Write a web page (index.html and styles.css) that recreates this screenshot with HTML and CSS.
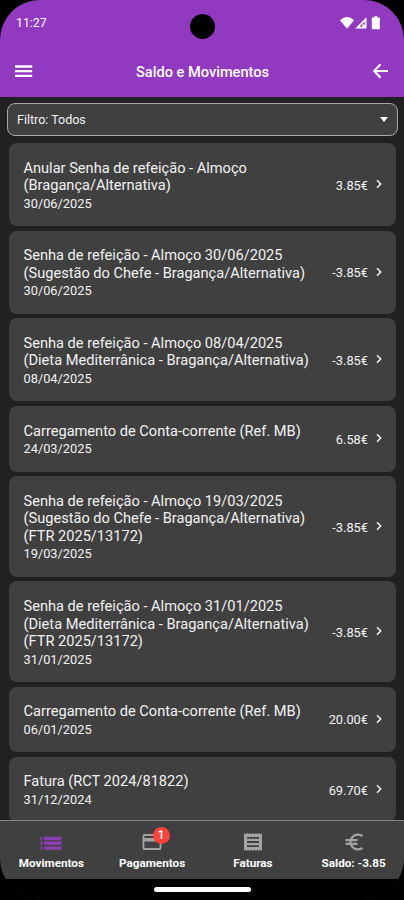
FILE: index.html
```html
<!DOCTYPE html>
<html lang="pt">
<head>
  <meta charset="UTF-8">
  <meta name="viewport" content="width=device-width, initial-scale=1.0">
  <title>Saldo e Movimentos</title>
  <link rel="stylesheet" href="styles.css">
</head>
<body>
  <div class="screen">
    <header class="header">
      <div class="status-bar">
        <span class="clock">11:27</span>
        <span class="camera"></span>
        <svg class="status-icons" width="42" height="14" viewBox="0 0 42 14">
          <path d="M0 4.2Q7 -2 14 4.2L7 12.8Z" fill="#fff"/>
          <path d="M26.5 1.2V12.5H15.2ZM24.7 5.5L19.5 10.8H22.3V8.5H24.7Z" fill="#fff" fill-rule="evenodd"/>
          <path d="M34.2 0.2h3.2v1.3h2.400v11.8h-8V1.5h2.400Z" fill="#fff"/>
        </svg>
      </div>
      <div class="toolbar">
        <svg class="menu-icon" width="18" height="14" viewBox="0 0 18 14">
          <path d="M0 2.5h17.2M0 7.2h17.2M0 11.9h17.2" stroke="#fff" stroke-width="2.3"/>
        </svg>
        <h1>Saldo e Movimentos</h1>
        <svg class="back-icon" width="16" height="16" viewBox="0 0 16 16">
          <path d="M7.5 1.2L1.2 8l6.3 6.8M1.4 8h13.6" fill="none" stroke="#fff" stroke-width="2.1"/>
        </svg>
      </div>
    </header>

    <div class="filter">
      <span>Filtro: Todos</span>
      <span class="caret"></span>
    </div>

    <ul class="movements">
      <li class="card">
        <div class="info">
          <p class="title">Anular Senha de refeição - Almoço<br>(Bragança/Alternativa)</p>
          <p class="date">30/06/2025</p>
        </div>
        <span class="amount">3.85€</span>
        <svg class="chevron" width="6" height="10" viewBox="0 0 6 10"><path d="M1 1.2L4.7 5L1 8.8"/></svg>
      </li>
      <li class="card">
        <div class="info">
          <p class="title">Senha de refeição - Almoço 30/06/2025<br>(Sugestão do Chefe - Bragança/Alternativa)</p>
          <p class="date">30/06/2025</p>
        </div>
        <span class="amount">-3.85€</span>
        <svg class="chevron" width="6" height="10" viewBox="0 0 6 10"><path d="M1 1.2L4.7 5L1 8.8"/></svg>
      </li>
      <li class="card">
        <div class="info">
          <p class="title">Senha de refeição - Almoço 08/04/2025<br>(Dieta Mediterrânica - Bragança/Alternativa)</p>
          <p class="date">08/04/2025</p>
        </div>
        <span class="amount">-3.85€</span>
        <svg class="chevron" width="6" height="10" viewBox="0 0 6 10"><path d="M1 1.2L4.7 5L1 8.8"/></svg>
      </li>
      <li class="card">
        <div class="info">
          <p class="title">Carregamento de Conta-corrente (Ref. MB)</p>
          <p class="date">24/03/2025</p>
        </div>
        <span class="amount">6.58€</span>
        <svg class="chevron" width="6" height="10" viewBox="0 0 6 10"><path d="M1 1.2L4.7 5L1 8.8"/></svg>
      </li>
      <li class="card">
        <div class="info">
          <p class="title">Senha de refeição - Almoço 19/03/2025<br>(Sugestão do Chefe - Bragança/Alternativa)<br>(FTR 2025/13172)</p>
          <p class="date">19/03/2025</p>
        </div>
        <span class="amount">-3.85€</span>
        <svg class="chevron" width="6" height="10" viewBox="0 0 6 10"><path d="M1 1.2L4.7 5L1 8.8"/></svg>
      </li>
      <li class="card">
        <div class="info">
          <p class="title">Senha de refeição - Almoço 31/01/2025<br>(Dieta Mediterrânica - Bragança/Alternativa)<br>(FTR 2025/13172)</p>
          <p class="date">31/01/2025</p>
        </div>
        <span class="amount">-3.85€</span>
        <svg class="chevron" width="6" height="10" viewBox="0 0 6 10"><path d="M1 1.2L4.7 5L1 8.8"/></svg>
      </li>
      <li class="card">
        <div class="info">
          <p class="title">Carregamento de Conta-corrente (Ref. MB)</p>
          <p class="date">06/01/2025</p>
        </div>
        <span class="amount">20.00€</span>
        <svg class="chevron" width="6" height="10" viewBox="0 0 6 10"><path d="M1 1.2L4.7 5L1 8.8"/></svg>
      </li>
      <li class="card">
        <div class="info">
          <p class="title">Fatura (RCT 2024/81822)</p>
          <p class="date">31/12/2024</p>
        </div>
        <span class="amount">69.70€</span>
        <svg class="chevron" width="6" height="10" viewBox="0 0 6 10"><path d="M1 1.2L4.7 5L1 8.8"/></svg>
      </li>
    </ul>

    <nav class="tabs">
      <a class="tab active">
        <svg width="22" height="20" viewBox="0 0 22 20">
          <path d="M0.5 6.5h2M0.5 11.3h2M0.5 16.1h2M4 6.5h17.5M4 11.3h17.5M4 16.1h17.5" stroke="currentColor" stroke-width="3.4"/>
        </svg>
        <span>Movimentos</span>
      </a>
      <a class="tab">
        <svg width="20" height="20" viewBox="0 0 20 20">
          <path d="M2.4 2h15.2a1.9 1.9 0 0 1 1.9 1.9v12.2a1.9 1.9 0 0 1-1.9 1.9H2.4a1.9 1.9 0 0 1-1.9-1.9V3.9a1.9 1.9 0 0 1 1.9-1.9ZM2.4 3.9v2h15.2v-2ZM2.4 9.5v6.6h15.2V9.5Z" fill="currentColor" fill-rule="evenodd"/>
        </svg>
        <span class="badge">1</span>
        <span>Pagamentos</span>
      </a>
      <a class="tab">
        <svg width="20" height="20" viewBox="0 0 20 20">
          <path d="M1 1l1.5 1.2L4 1l1.5 1.2L7 1l1.5 1.2L10 1l1.5 1.2L13 1l1.5 1.2L16 1l1.5 1.2L19 1v18l-1.5-1.2L16 19l-1.5-1.2L13 19l-1.5-1.2L10 19l-1.5-1.2L7 19l-1.5-1.2L4 19l-1.5-1.2L1 19ZM4 5v1.8h12V5ZM4 9.1v1.8h12V9.1ZM4 13.2V15h12v-1.8Z" fill="currentColor" fill-rule="evenodd"/>
        </svg>
        <span>Faturas</span>
      </a>
      <a class="tab">
        <svg width="20" height="20" viewBox="0 0 20 20">
          <path d="M18.5 4.2A7.4 7.4 0 1 0 18.5 15.8M1.5 8.2h12M1.5 11.8h12" fill="none" stroke="currentColor" stroke-width="2.3"/>
        </svg>
        <span>Saldo: -3.85</span>
      </a>
    </nav>

    <div class="gesture-bar"><span></span></div>
  </div>
</body>
</html>
```
FILE: styles.css
```css
* {
  box-sizing: border-box;
  margin: 0;
  padding: 0;
}
body {
  background-color: #000;
  color: #f2f2f2;
  font-family: Roboto, "Liberation Sans", sans-serif;
}
.screen {
  display: flex;
  flex-direction: column;
  height: 900px;
  overflow: hidden;
  border-radius: 40px 40px 42px 42px;
  background-color: #212121;
}
.header {
  flex: none;
  height: 96.5px;
  background-color: #9239c2;
  color: #fff;
}
.status-bar {
  display: grid;
  grid-template-columns: 1fr 25px 1fr;
  align-items: center;
  height: 46px;
  padding: 0 22px 0 16px;
}
.clock {
  font-size: 12.3px;
}
.camera {
  width: 25px;
  height: 25px;
  margin: 6px 0 0 3.5px;
  border-radius: 50%;
  background-color: #000;
}
.status-icons {
  justify-self: end;
}
.toolbar {
  display: grid;
  grid-template-columns: 1fr auto 1fr;
  align-items: center;
  height: 50px;
  padding: 0 15px;
}
h1 {
  padding: 2px 0 0 1px;
  font-size: 14.6px;
  font-weight: 500;
}
.back-icon {
  justify-self: end;
}
.filter {
  flex: none;
  display: flex;
  justify-content: space-between;
  align-items: center;
  height: 33px;
  margin: 6.5px 6px 7px 7px;
  padding: 0 9px;
  border: 1px solid #a8a8a8;
  border-radius: 8px;
  background-color: #404040;
  font-size: 12.5px;
}
.caret {
  border: 4.5px solid transparent;
  border-top: 5px solid #fff;
  border-bottom: 0;
}
.movements {
  flex: 1;
  min-height: 0;
  overflow: hidden;
  display: flex;
  flex-direction: column;
  gap: 4.6px;
  padding: 0 8px 0 9px;
  list-style: none;
}
.card {
  flex: none;
  display: flex;
  align-items: center;
  padding: 16.6px 14px 13.4px 14.5px;
  border-radius: 8px;
  background-color: #404040;
}
.info {
  flex: 1;
}
.title {
  font-size: 14.6px;
  line-height: 17.55px;
  white-space: nowrap;
}
.date {
  font-size: 12.8px;
  line-height: 18px;
}
.amount {
  margin-bottom: 2px;
  font-size: 12.8px;
}
.chevron {
  margin: 0 0 4px 8px;
  fill: none;
  stroke: #f2f2f2;
  stroke-width: 1.5;
}
.tabs {
  flex: none;
  display: grid;
  grid-template-columns: repeat(4, 1fr);
  height: 59px;
  padding-left: 1px;
  border-top: 1px solid #858585;
  background-color: #404040;
}
.tab {
  position: relative;
  display: flex;
  flex-direction: column;
  align-items: center;
  gap: 4px;
  padding-top: 11px;
  color: #fff;
  font-size: 11.7px;
  font-weight: 700;
  line-height: 14px;
}
.tab svg {
  color: #a3a3a3;
}
.active svg {
  color: #8c3fb0;
}
.badge {
  position: absolute;
  top: 6px;
  left: 51px;
  width: 17px;
  height: 17px;
  border-radius: 50%;
  background-color: #f9423a;
  font-size: 12px;
  font-weight: 500;
  line-height: 17px;
  text-align: center;
}
.gesture-bar {
  flex: none;
  display: flex;
  justify-content: center;
  height: 21px;
  padding-top: 8px;
  background-color: #000;
}
.gesture-bar span {
  width: 97px;
  height: 5px;
  border-radius: 3px;
  background-color: #fff;
}
```
